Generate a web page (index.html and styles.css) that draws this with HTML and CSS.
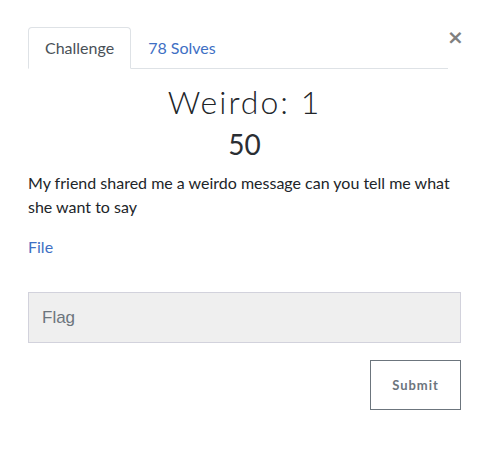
FILE: index.html
```html
<!DOCTYPE html>
<html>
<head>
<meta charset="utf-8">
<link rel="stylesheet" href="styles.css">
</head>
<body>
<div class="modal">
  <button class="close" aria-label="Close">&times;</button>
  <ul class="tabs">
    <li class="tab active">Challenge</li>
    <li class="tab link">78 Solves</li>
  </ul>
  <div class="content">
    <h2 class="title">Weirdo: 1</h2>
    <h3 class="value">50</h3>
    <p class="desc">My friend shared me a weirdo message can you tell me what she want to say</p>
    <a class="file" href="#">File</a>
    <div class="form">
      <input class="flag" type="text" placeholder="Flag">
      <div class="actions">
        <button class="submit">Submit</button>
      </div>
    </div>
  </div>
</div>
</body>
</html>
```
FILE: styles.css
```css
html, body {
  margin: 0;
  padding: 0;
  background: #fff;
}
body {
  font-family: Lato, "Open Sans", sans-serif;
  color: #212529;
}
.modal {
  position: relative;
  padding: 27px 30px 0 28px;
}
.close {
  position: absolute;
  top: 27px;
  left: 447px;
  border: 0;
  background: none;
  padding: 0;
  font-family: "DejaVu Sans", sans-serif;
  font-size: 20px;
  font-weight: bold;
  line-height: 1;
  color: #808080;
  cursor: pointer;
}
.tabs {
  list-style: none;
  margin: 0;
  padding: 0;
  display: flex;
  width: 420px;
  border-bottom: 1px solid #dee2e6;
}
.tab {
  font-size: 16px;
  line-height: 24px;
  padding: 8px 16px;
  border: 1px solid transparent;
  border-radius: 4px 4px 0 0;
  margin-bottom: -1px;
}
.tab.active {
  color: #495057;
  border-color: #dee2e6 #dee2e6 #fff;
  background: #fff;
}
.tab.link {
  color: #3e6fc4;
}
.content {
  width: 433px;
}
.title {
  margin: 14px 0 0;
  text-align: center;
  font-family: Lato, sans-serif;
  font-weight: 300;
  font-size: 32px;
  line-height: 38px;
  letter-spacing: 2px;
}
.value {
  margin: 6px 0 0;
  text-align: center;
  font-weight: 400;
  font-size: 28px;
  line-height: 34px;
  color: #2a2e33;
}
.desc {
  margin: 10px 0 16px;
  font-size: 16px;
  line-height: 24px;
}
.file {
  display: inline-block;
  font-size: 16px;
  line-height: 24px;
  color: #3e6fc4;
  text-decoration: none;
}
.form {
  margin-top: 33px;
}
.flag {
  display: block;
  box-sizing: border-box;
  width: 433px;
  height: 51px;
  margin: 0;
  padding: 0 13px;
  border: 1px solid #d2d2dc;
  background: #efefef;
  font-family: "Liberation Sans", Arial, sans-serif;
  font-size: 17px;
  color: #495057;
  outline: none;
}
.flag::placeholder {
  color: #6c757d;
}
.actions {
  display: flex;
  justify-content: flex-end;
  margin-top: 17px;
}
.submit {
  box-sizing: border-box;
  width: 91px;
  height: 50px;
  border: 1px solid #6c757d;
  background: #fff;
  color: #6c757d;
  font-family: Lato, sans-serif;
  font-weight: 700;
  font-size: 13px;
  letter-spacing: 1px;
  padding: 0;
}
```
